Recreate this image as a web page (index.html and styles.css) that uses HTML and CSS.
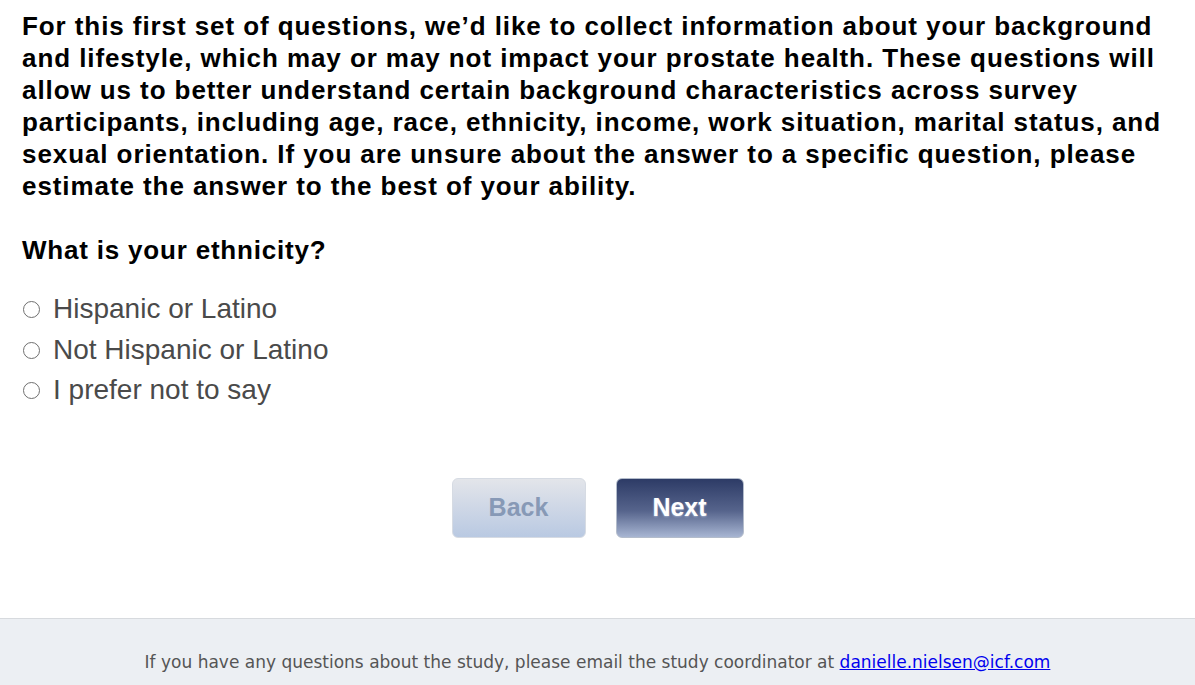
FILE: index.html
```html
<!DOCTYPE html>
<html lang="en">
<head>
  <meta charset="UTF-8">
  <title>Survey</title>
  <link rel="stylesheet" href="styles.css">
</head>
<body>

  <!-- Survey page -->
  <div class="survey">
    <p class="intro">For this first set of questions, we’d like to collect information about your background and lifestyle, which may or may not impact your prostate health. These questions will allow us to better understand certain background characteristics across survey participants, including age, race, ethnicity, income, work situation, marital status, and sexual orientation. If you are unsure about the answer to a specific question, please estimate the answer to the best of your ability.</p>

    <p class="question">What is your ethnicity?</p>

    <div class="options">
      <label class="option"><input type="radio" name="ethnicity">Hispanic or Latino</label>
      <label class="option"><input type="radio" name="ethnicity">Not Hispanic or Latino</label>
      <label class="option"><input type="radio" name="ethnicity">I prefer not to say</label>
    </div>

    <div class="nav">
      <button class="btn btn-back">Back</button>
      <button class="btn btn-next">Next</button>
    </div>
  </div>

  <!-- Footer -->
  <div class="footer">
    If you have any questions about the study, please email the study coordinator at <a href="#">danielle.nielsen@icf.com</a>
  </div>

</body>
</html>
```

FILE: styles.css
```css
* {
  box-sizing: border-box;
}

body {
  margin: 0;
  padding: 0;
  font-family: 'Liberation Sans', Arial, sans-serif;
  background: #fff;
  color: #000;
}

.survey {
  padding: 10px 22px 0 22px;
  height: 618px;
}

.intro {
  margin: 0;
  font-size: 26px;
  font-weight: bold;
  line-height: 32px;
  letter-spacing: 0.92px;
}

.question {
  margin: 32px 0 0 0;
  font-size: 26px;
  font-weight: bold;
  line-height: 32px;
  letter-spacing: 0.8px;
}

.options {
  margin-top: 23px;
  display: flex;
  flex-direction: column;
}

.option {
  display: flex;
  align-items: center;
  height: 40.5px;
  font-size: 28px;
  color: #4a4a4a;
}

.option input {
  appearance: none;
  margin: 1px 13px 0 1px;
  width: 17px;
  height: 17px;
  border: 1.5px solid #6f6f6f;
  border-radius: 50%;
  background: #fff;
}

.nav {
  display: flex;
  justify-content: center;
  gap: 30px;
  margin-top: 67px;
}

.btn {
  height: 60px;
  border-radius: 6px;
  font-family: 'Liberation Sans', Arial, sans-serif;
  font-size: 25px;
  font-weight: bold;
  cursor: pointer;
}

.btn-back {
  width: 134px;
  border: 1px solid #d6dbe3;
  background: linear-gradient(#e3e5ea, #b9c9e2);
  color: #8799b6;
}

.btn-next {
  width: 128px;
  border: 1px solid #b3bccb;
  background: linear-gradient(#2d3b66, #56648c 55%, #a7b5d2);
  color: #fff;
  text-shadow: 0 1px 2px #9aa7c4;
}

.footer {
  height: 67px;
  border-top: 1px solid #d7dade;
  background: #eceff3;
  text-align: center;
  padding-top: 33px;
  font-family: 'DejaVu Sans', Tahoma, sans-serif;
  font-size: 17px;
  color: #555;
}

.footer a {
  color: #0000ee;
}
```
